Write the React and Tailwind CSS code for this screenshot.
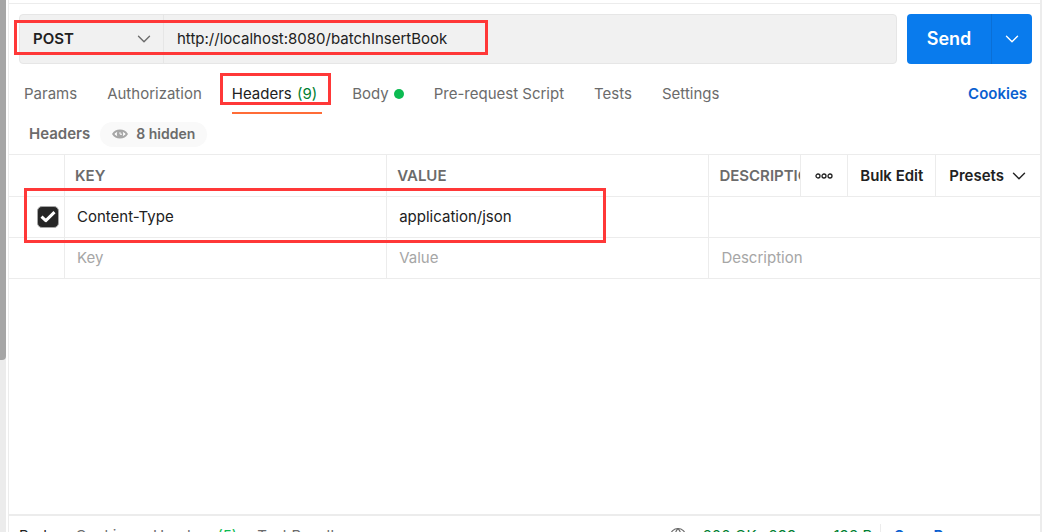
import { FiChevronDown, FiGlobe } from "react-icons/fi";

function Highlight({ className }) {
  return <div className={`absolute pointer-events-none border-3 border-[#ff3838] ${className}`}></div>;
}

function Tab({ children, active }) {
  return (
    <button
      className={
        active
          ? "relative h-10 pr-[5px] border-b-2 border-[#ff6c37] pt-[2px] text-[#212121] whitespace-nowrap"
          : "h-10 flex items-center gap-[5px] text-[#6b6b6b] whitespace-nowrap"
      }
    >
      {children}
    </button>
  );
}

function RequestBar() {
  return (
    <div className="flex gap-[10px] pl-[10px] pr-2 pt-[10px]">
      <div className="relative flex flex-1 min-w-0 h-[50px] rounded border border-[#e6e6e6] bg-[#f1f1f1]">
        <div className="grid w-36 shrink-0 items-center border-r border-[#e6e6e6]">
          <select
            aria-label="Method"
            className="col-start-1 row-start-1 h-full appearance-none bg-transparent pl-[13px] font-semibold text-[#212121] outline-none"
          >
            <option>POST</option>
            <option>GET</option>
          </select>
          <FiChevronDown
            strokeWidth={1.5}
            className="col-start-1 row-start-1 justify-self-end mr-2 size-[22px] text-[#6b6b6b] pointer-events-none"
          />
        </div>
        <input
          aria-label="Request URL"
          className="flex-1 min-w-0 bg-transparent px-[13px] text-[#212121] outline-none"
          type="text"
          defaultValue="http://localhost:8080/batchInsertBook"
        />
        <Highlight className="-left-[6px] top-[5px] w-[474px] h-[35px]" />
      </div>

      <div className="flex h-[50px] rounded overflow-hidden bg-[#097bed] text-white">
        <button className="w-[84px] text-lg font-semibold">Send</button>
        <button
          aria-label="Send options"
          className="flex w-[41px] items-center justify-center border-l border-[#0a6fd6]"
        >
          <FiChevronDown strokeWidth={1.5} className="size-[22px]" />
        </button>
      </div>
    </div>
  );
}

function RequestTabs() {
  return (
    <div className="flex items-center justify-between pl-[15px] pr-[13px] pt-[10px]">
      <div className="flex gap-[30px]">
        <Tab>Params</Tab>
        <Tab>Authorization</Tab>
        <Tab active>
          Headers <span className="ml-px text-[#007f31]">(9)</span>
          <Highlight className="-left-3 -top-px w-[111px] h-8" />
        </Tab>
        <Tab>
          Body
          <span className="size-[10px] rounded-full bg-[#0cbb52]"></span>
        </Tab>
        <Tab>Pre-request Script</Tab>
        <Tab>Tests</Tab>
        <Tab>Settings</Tab>
      </div>
      <a href="#cookies" className="font-semibold text-[#0a5fd0]">
        Cookies
      </a>
    </div>
  );
}

function HeadersTable() {
  const th = "h-[42px] border-b border-r border-[#ececec] pl-[10px] text-left font-semibold text-[#6b6b6b]";
  const td = "h-[41px] border-b border-r border-[#ececec]";
  const input = "block w-full h-10 px-3 pb-[2px] bg-transparent text-[#212121] placeholder:text-[#a6a6a6] outline-none";

  return (
    <div className="relative border-t border-[#ececec]">
      <table className="w-full table-fixed border-separate border-spacing-0">
        <colgroup>
          <col className="w-14" />
          <col className="w-5/16" />
          <col className="w-5/16" />
          <col />
        </colgroup>
        <thead>
          <tr>
            <th className={th}></th>
            <th className={th}>KEY</th>
            <th className={th}>VALUE</th>
            <th className="h-[42px] border-b border-[#ececec] p-0 text-left font-semibold">
              <div className="flex h-[41px] items-center">
                <span className="flex-1 min-w-0 overflow-hidden pl-[10px] text-[#6b6b6b]">DESCRIPTION</span>
                <button
                  aria-label="More columns"
                  className="flex h-full w-[47px] items-center justify-center border-l border-[#ececec]"
                >
                  <svg width="18" height="6" viewBox="0 0 18 6" fill="none" stroke="#212121" strokeWidth="1.3">
                    <circle cx="3" cy="3" r="2" />
                    <circle cx="9" cy="3" r="2" />
                    <circle cx="15" cy="3" r="2" />
                  </svg>
                </button>
                <button className="h-full border-l border-[#ececec] px-3 text-[#212121] whitespace-nowrap">
                  Bulk Edit
                </button>
                <button className="flex h-full items-center gap-1 border-l border-[#ececec] pl-[13px] pr-[10px] text-[#212121]">
                  Presets
                  <FiChevronDown strokeWidth={1.5} className="size-[22px]" />
                </button>
              </div>
            </th>
          </tr>
        </thead>
        <tbody>
          <tr>
            <td className={td}>
              <div className="ml-7 grid size-[22px] place-items-center">
                <input
                  aria-label="Enable Content-Type"
                  type="checkbox"
                  defaultChecked
                  className="col-start-1 row-start-1 size-[22px] appearance-none rounded-[5px] border border-[#a6a6a6] checked:bg-[#262626]"
                />
                <svg className="col-start-1 row-start-1 size-4 pointer-events-none" viewBox="0 0 16 16" fill="none">
                  <path d="M1.5 7.6 L5.8 11.6 L14.5 3.2" stroke="white" strokeWidth="3" strokeLinejoin="round" />
                </svg>
              </div>
            </td>
            <td className={td}>
              <input aria-label="Key" className={input} defaultValue="Content-Type" />
            </td>
            <td className={td}>
              <input aria-label="Value" className={input} defaultValue="application/json" />
            </td>
            <td className="h-[41px] border-b border-[#ececec]">
              <input aria-label="Description" className={input} />
            </td>
          </tr>
          <tr>
            <td className={td}></td>
            <td className={td}>
              <input aria-label="New key" className={input} placeholder="Key" />
            </td>
            <td className={td}>
              <input aria-label="New value" className={input} placeholder="Value" />
            </td>
            <td className="h-[41px] border-b border-[#ececec]">
              <input aria-label="New description" className={input} placeholder="Description" />
            </td>
          </tr>
        </tbody>
      </table>
      <Highlight className="left-[15px] top-[33px] w-[582px] h-[55px]" />
    </div>
  );
}

function ResponseBar() {
  return (
    <div className="h-[18px] shrink-0 overflow-hidden border-t-2 border-[#ececec]">
      <div className="flex h-10 items-center justify-between pl-[10px] pr-[35px] text-[#6b6b6b] whitespace-nowrap">
        <div className="flex gap-5">
          <button className="text-[#212121]">Body</button>
          <button>Cookies</button>
          <button>
            Headers <span className="text-[#0cbb52]">(5)</span>
          </button>
          <button>Test Results</button>
        </div>
        <div className="flex items-center text-[#007f31]">
          <FiGlobe strokeWidth={1.5} className="mr-4 size-[18px] text-[#6b6b6b]" />
          <span className="mr-3">200 OK</span>
          <span className="mr-3">299 ms</span>
          <span className="mr-2">193 B</span>
          <button className="h-6 border-l border-[#ececec] pl-[13px] font-semibold text-[#0a5fd0]">
            Save Response
          </button>
        </div>
      </div>
    </div>
  );
}

function App() {
  return (
    <div className="flex h-screen overflow-hidden bg-white font-['Inter',sans-serif] text-[15px] leading-5">
      {/* Scrollbar of the sidebar */}
      <div className="mr-[2px] w-[6px] shrink-0 bg-[#ececec]">
        <div className="h-[360px] rounded-br bg-[#a6a6a6]"></div>
      </div>

      <main className="mr-3 flex flex-1 min-w-0 flex-col border-l border-r-2 border-l-[#ececec] border-r-[#ececec] pt-[3px]">
        <div className="flex-1 min-h-0 border-t border-[#ececec]">
          <RequestBar />
          <RequestTabs />
          <div className="flex h-10 items-center gap-[10px] pl-5">
            <h2 className="font-semibold text-[#6b6b6b]">Headers</h2>
            <button className="flex h-[25px] items-center gap-2 rounded-full bg-[#f9f9f9] px-3 text-sm font-semibold text-[#6b6b6b]">
              <svg width="16" height="10" viewBox="0 0 16 10" fill="none">
                <path
                  d="M1.2 5 C4 0.4 12 0.4 14.8 5 C12 9.6 4 9.6 1.2 5 Z"
                  fill="white"
                  stroke="#a6a6a6"
                  strokeWidth="2"
                />
                <circle cx="8" cy="5" r="3.2" fill="#a6a6a6" />
                <path d="M8 3.2 V5.2 H10" stroke="white" strokeWidth="1" />
              </svg>
              8 hidden
            </button>
          </div>
          <HeadersTable />
        </div>
        <ResponseBar />
      </main>
    </div>
  );
}

export default App;
